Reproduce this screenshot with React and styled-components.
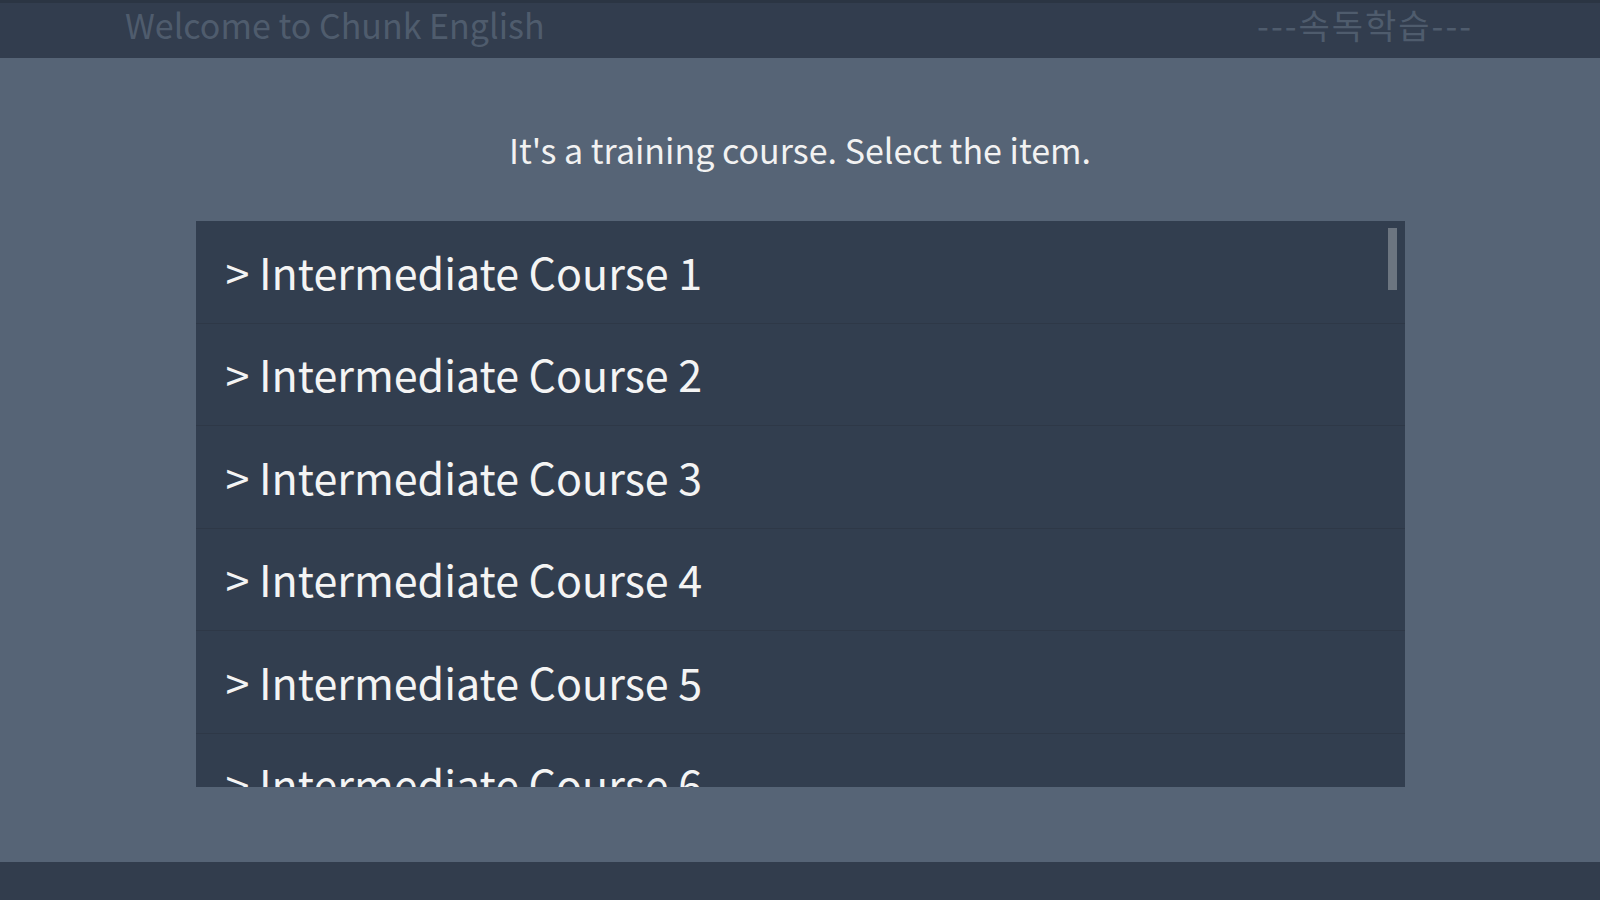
import styled, { createGlobalStyle } from 'styled-components';

const GlobalStyle = createGlobalStyle`
  html, body {
    margin: 0;
    padding: 0;
    height: 100%;
    background: #566476;
    font-family: "Noto Sans CJK KR", "Noto Sans", sans-serif;
  }
  #root {
    height: 100%;
  }
`

const Page = styled.div`
  height: 900px;
  display: flex;
  flex-direction: column;
  background: #566476;
`
const Header = styled.header`
  height: 58px;
  box-sizing: border-box;
  border-top: 3px solid #2b3543;
  background: #323d4e;
  display: flex;
  align-items: center;
  justify-content: space-between;
  padding: 0 127px 12px 125px;
`
const HeaderText = styled.span`
  font-size: ${(p) => p.size || 32}px;
  color: #4f5c6d;
  letter-spacing: ${(p) => p.spacing || 0}px;
`
const Main = styled.main`
  flex: 1;
  display: flex;
  flex-direction: column;
  align-items: center;
`
const Subtitle = styled.p`
  margin: 72px 0 0;
  height: 40px;
  line-height: 40px;
  font-size: 34px;
  color: #f2f2f2;
`
const ListFrame = styled.div`
  position: relative;
  margin-top: 51px;
  width: 1209px;
  height: 566px;
  background: #323e4f;
`
const List = styled.ul`
  list-style: none;
  margin: 0;
  padding: 0;
  height: 100%;
  overflow-y: auto;
  scrollbar-width: none;

  &::-webkit-scrollbar {
    display: none;
  }
`
const Thumb = styled.div`
  position: absolute;
  top: 7px;
  right: 8px;
  width: 9px;
  height: 62px;
  background: #6c7580;
`
const Row = styled.li`
  box-sizing: border-box;
  height: 102.5px;
  border-bottom: 1px solid #2e3847;
  display: flex;
  align-items: center;
  padding: 0 0 2px 30px;
  font-size: 43px;
  color: #f4f4f4;
  cursor: pointer;
`
const Footer = styled.footer`
  height: 38px;
  background: #323d4d;
`

const courses = Array.from({ length: 50 }, (_, i) => `Intermediate Course ${i + 1}`)

export default function App() {
  return (
    <Page>
      <GlobalStyle />
      <Header>
        <HeaderText size={34}>Welcome to Chunk English</HeaderText>
        <HeaderText size={34} spacing={2}>---속독학습---</HeaderText>
      </Header>
      <Main>
        <Subtitle>It's a training course. Select the item.</Subtitle>
        <ListFrame>
          <List>
            {courses.map((c) => (
              <Row key={c}>&gt; {c}</Row>
            ))}
          </List>
          <Thumb />
        </ListFrame>
      </Main>
      <Footer />
    </Page>
  );
}
